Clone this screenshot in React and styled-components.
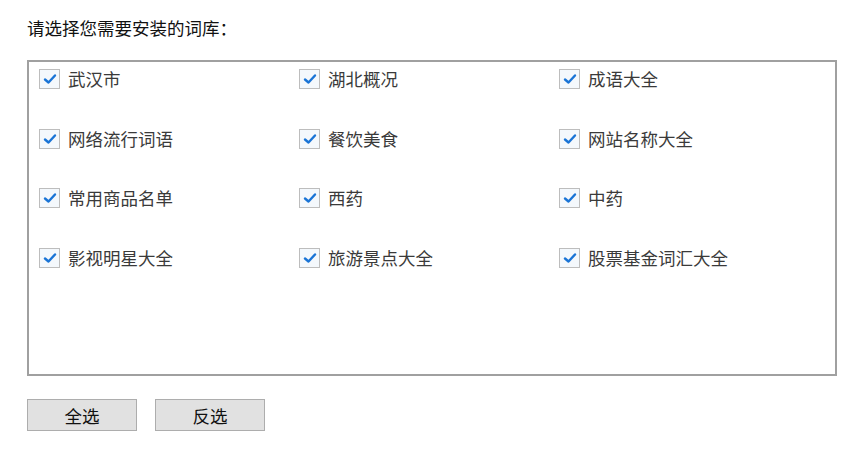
import React, { useState } from "react";
import styled, { createGlobalStyle } from "styled-components";

const Global = createGlobalStyle`
  html, body { margin: 0; padding: 0; background: #fff; }
  body { font-family: "Microsoft YaHei", "Noto Sans CJK SC", "Liberation Sans", sans-serif; }
`;

const Page = styled.div`
  padding: 16px 26px 0 27px;
  width: 810px;
`;

const Title = styled.div`
  font-size: 17.5px;
  line-height: 24px;
  color: #111;
  height: 24px;
  margin-bottom: 20px;
`;

const Box = styled.div`
  box-sizing: border-box;
  width: 810px;
  height: 316px;
  border: 2px solid #a0a0a0;
  padding: 7px 0 0 10px;
`;

const Grid = styled.div`
  display: grid;
  grid-template-columns: 260px 260px 260px;
  grid-auto-rows: 59.7px;
`;

const Item = styled.label`
  display: flex;
  align-items: flex-start;
  gap: 8px;
  cursor: pointer;
`;

const Check = styled.span`
  box-sizing: border-box;
  width: 21px;
  height: 20px;
  border: 1px solid #bdbdbd;
  background: ${(p) => (p.$on ? "#f4f8fc" : "#fff")};
  display: flex;
  align-items: center;
  justify-content: center;
  flex: none;
`;

const Label = styled.span`
  font-size: 17.5px;
  line-height: 20px;
  color: #3a3a3a;
`;

const Buttons = styled.div`
  display: flex;
  gap: 18px;
  margin-top: 23px;
`;

const Btn = styled.button`
  box-sizing: border-box;
  width: 110px;
  height: 32px;
  background: #e1e1e1;
  border: 1px solid #adadad;
  font-family: inherit;
  font-size: 17.5px;
  color: #111;
  padding: 0;
  cursor: pointer;
`;

const items = [
  "武汉市", "湖北概况", "成语大全",
  "网络流行词语", "餐饮美食", "网站名称大全",
  "常用商品名单", "西药", "中药",
  "影视明星大全", "旅游景点大全", "股票基金词汇大全",
];

export default function App() {
  const [sel, setSel] = useState(items.map(() => true));
  const toggle = (i) => setSel((s) => s.map((v, j) => (j === i ? !v : v)));
  return (
    <Page>
      <Global />
      <Title>请选择您需要安装的词库：</Title>
      <Box>
        <Grid>
          {items.map((t, i) => (
            <Item key={t} onClick={() => toggle(i)}>
              <Check $on={sel[i]}>
                {sel[i] && (
                  <svg width="14" height="12" viewBox="0 0 14 12">
                    <path d="M2 6.5 L5.5 9.5 L12 2.5" fill="none" stroke="#1a74d6" strokeWidth="2.4" strokeLinecap="round" strokeLinejoin="round" />
                  </svg>
                )}
              </Check>
              <Label>{t}</Label>
            </Item>
          ))}
        </Grid>
      </Box>
      <Buttons>
        <Btn onClick={() => setSel(items.map(() => true))}>全选</Btn>
        <Btn onClick={() => setSel((s) => s.map((v) => !v))}>反选</Btn>
      </Buttons>
    </Page>
  );
}
